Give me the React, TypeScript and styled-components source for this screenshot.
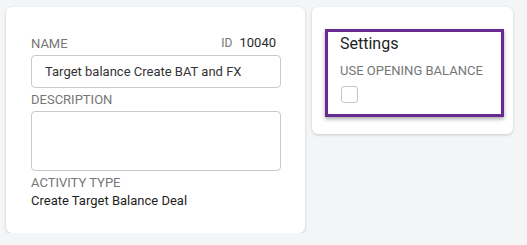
import React from 'react'
import styled, { createGlobalStyle } from 'styled-components'

const GlobalStyle = createGlobalStyle`
  body {
    margin: 0;
    background: #f4f5f7;
    font-family: Roboto, "Liberation Sans", Arial, sans-serif;
  }
`;

const Page = styled.div`
  display: flex;
  align-items: flex-start;
  gap: 7px;
  padding: 7px 14px 0 6px;
`;

const Card = styled.div<{ $width: number }>`
  width: ${(p) => p.$width}px;
  box-sizing: border-box;
  background: #fff;
  border-radius: 6px;
  box-shadow: 0 1px 3px rgba(0, 0, 0, 0.18);
`;

const DealCard = styled(Card)`
  padding: 29px 24px 24px 25px;
`;

const SettingsCard = styled(Card)`
  padding: 22px 9px 17px 13px;
`;

const HeaderRow = styled.div`
  display: flex;
  justify-content: space-between;
  align-items: flex-end;
`;

const Label = styled.div`
  font-size: 13px;
  line-height: 14px;
  color: #767676;
  text-transform: uppercase;
`;

const IdBox = styled.div`
  display: flex;
  align-items: baseline;
  gap: 7px;
  margin: 0 5px 1px 0;
  line-height: 14px;
`;

const IdLabel = styled.span`
  font-size: 12px;
  color: #767676;
`;

const IdValue = styled.span`
  font-size: 13px;
  color: #2a2a2a;
`;

const Field = styled.div<{ $first?: boolean }>`
  margin-top: ${(p) => (p.$first ? 0 : 5)}px;
  display: flex;
  flex-direction: column;
  gap: 4px;
`;

const TextInput = styled.input`
  box-sizing: border-box;
  display: block;
  width: 100%;
  height: 33px;
  margin: 0;
  padding: 0 0 0 13px;
  border: 1px solid #cacac2;
  border-radius: 4px;
  font-family: Roboto, "Liberation Sans", Arial, sans-serif;
  font-size: 13px;
  color: #333;
  background: #fff;
  outline: none;
`;

const TextArea = styled.textarea`
  box-sizing: border-box;
  display: block;
  width: 100%;
  height: 60px;
  margin: 0;
  padding: 6px 13px;
  border: 1px solid #cacac2;
  border-radius: 4px;
  font-family: Roboto, "Liberation Sans", Arial, sans-serif;
  font-size: 13px;
  resize: none;
  outline: none;
`;

const Value = styled.div`
  font-size: 13px;
  line-height: 16px;
  color: #1e1e1e;
  margin-top: -1px;
`;

const Highlight = styled.div`
  height: 88px;
  box-sizing: border-box;
  border: 3px solid #672a8f;
  box-shadow: 0 2px 4px rgba(0, 0, 0, 0.35);
  padding: 2px 12px 0;
  display: flex;
  flex-direction: column;
  align-items: flex-start;
`;

const Title = styled.div`
  font-size: 16px;
  line-height: 19px;
  color: #1e1e1e;
  margin-bottom: 11px;
`;

const Checkbox = styled.input`
  appearance: none;
  width: 17px;
  height: 17px;
  margin: 8px 0 0 1px;
  border: 1px solid #c6c6c6;
  border-radius: 3px;
  background: #fff;
`;

const App = () => {
  return (
    <>
      <GlobalStyle />
      <Page>
        <DealCard $width={299}>
          <Field $first>
            <HeaderRow>
              <Label>Name</Label>
              <IdBox>
                <IdLabel>ID</IdLabel>
                <IdValue>10040</IdValue>
              </IdBox>
            </HeaderRow>
            <TextInput defaultValue="Target balance Create BAT and FX" />
          </Field>
          <Field>
            <Label>Description</Label>
            <TextArea />
          </Field>
          <Field>
            <Label>Activity type</Label>
            <Value>Create Target Balance Deal</Value>
          </Field>
        </DealCard>
        <SettingsCard $width={201}>
          <Highlight>
            <Title>Settings</Title>
            <Label>Use opening balance</Label>
            <Checkbox type="checkbox" />
          </Highlight>
        </SettingsCard>
      </Page>
    </>
  )
}

export default App
